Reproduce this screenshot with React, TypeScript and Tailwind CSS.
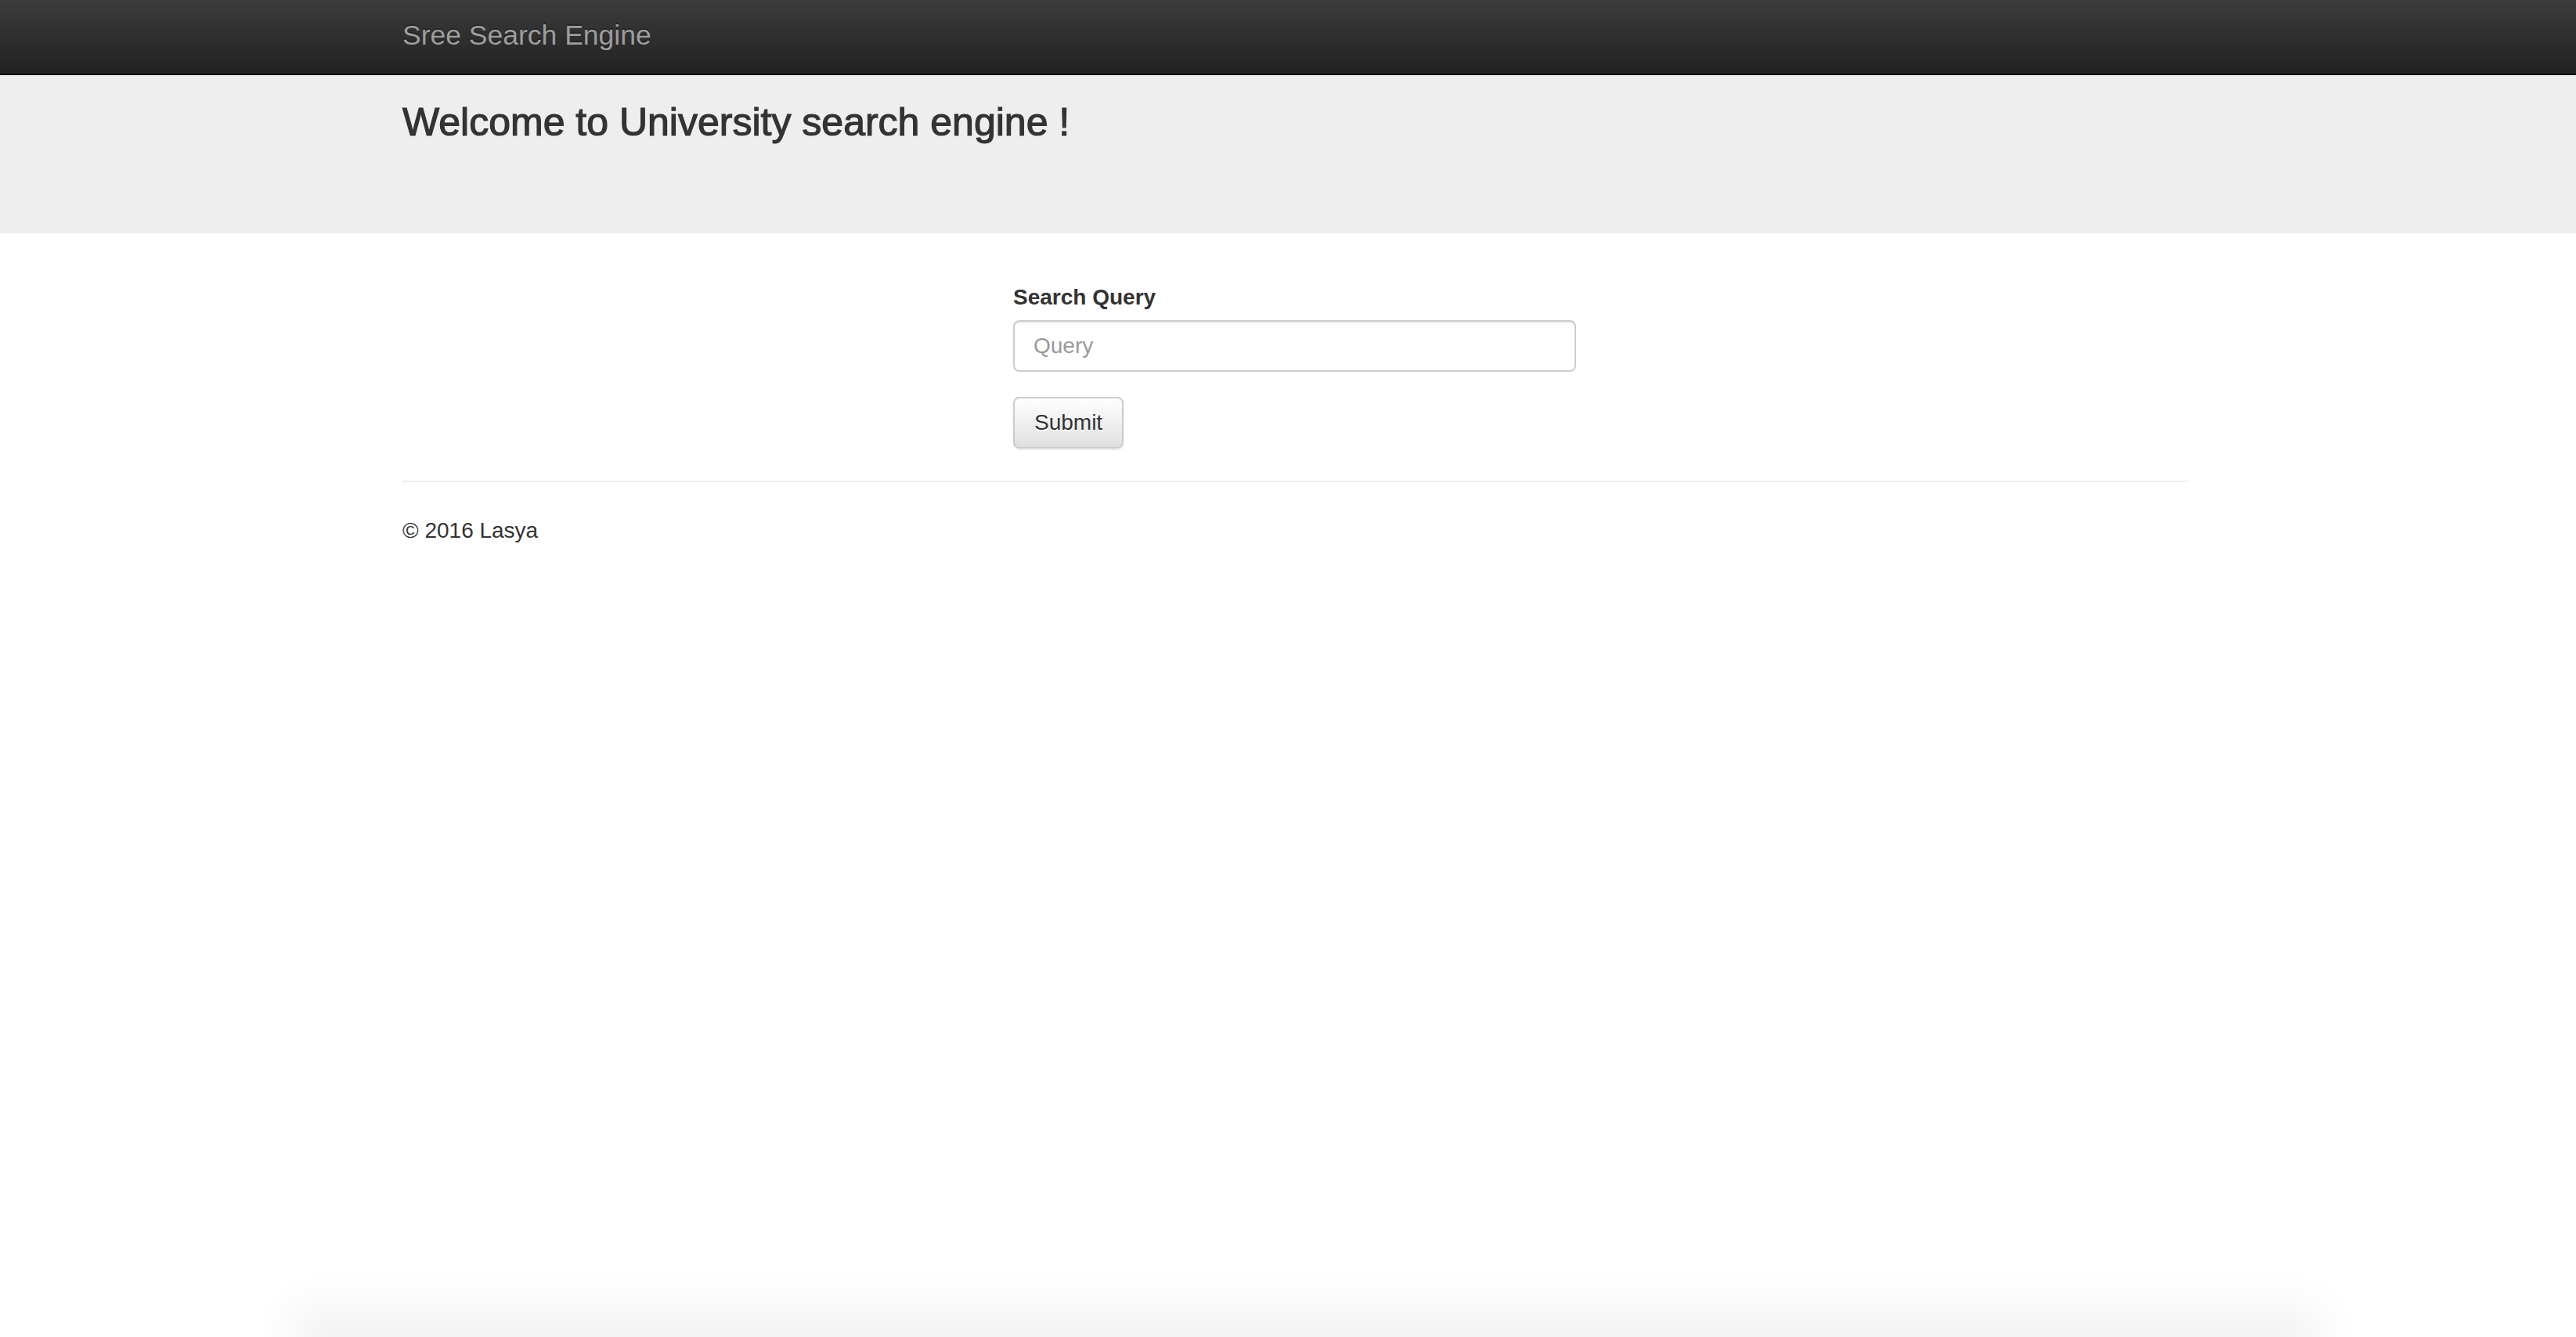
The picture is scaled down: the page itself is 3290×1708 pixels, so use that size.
import React from 'react';

function App() {
  const [query, setQuery] = React.useState('');

  return (
    <div className="h-[1708px] overflow-hidden flex flex-col bg-white font-['Liberation_Sans',Arial,sans-serif] text-[#333]">
      <nav className="h-[96px] shrink-0 border-b-2 border-[#080808] bg-linear-to-b from-[#3c3c3c] to-[#222]">
        <div className="ml-[514px] w-[2280px] pt-[27px]">
          <a href="#" className="text-[35.5px] leading-[36px] text-[#9d9d9d] [text-shadow:0_-2px_0_rgba(0,0,0,0.25)]">
            Sree Search Engine
          </a>
        </div>
      </nav>

      <div className="h-[202px] shrink-0 bg-[#eee] pt-[33px]">
        <div className="ml-[514px] w-[2280px]">
          <h1 className="text-[50px] leading-[55px] [-webkit-text-stroke:1.2px_#333]">
            Welcome to University search engine !
          </h1>
        </div>
      </div>

      <div className="ml-[514px] w-[2280px]">
        <form className="ml-[780px] w-[719px] pt-[62px]" onSubmit={(e) => e.preventDefault()}>
          <label htmlFor="q" className="block mb-[9px] text-[28px] leading-[40px] font-bold">
            Search Query
          </label>
          <input
            id="q"
            value={query}
            onChange={(e) => setQuery(e.target.value)}
            placeholder="Query"
            className="block w-full h-[66px] px-[24px] text-[28px] text-[#555] bg-white border-2 border-[#ccc] rounded-[8px] shadow-[inset_0_2px_2px_rgba(0,0,0,0.075)] placeholder:text-[#999] outline-none"
          />
          <button
            type="submit"
            className="mt-[32px] h-[66px] px-[25px] text-[28px] text-[#333] border-2 border-[#ccc] rounded-[8px] bg-linear-to-b from-white to-[#e0e0e0] [text-shadow:0_2px_0_#fff] shadow-[0_2px_2px_rgba(0,0,0,0.075)]"
          >
            Submit
          </button>
        </form>

        <hr className="mt-[41px] border-0 border-t-2 border-[#eee]" />

        <footer className="mt-[42px]">
          <p className="text-[28px] leading-[40px]">© 2016 Lasya</p>
        </footer>
      </div>

      <div className="mt-auto ml-[410px] w-[2517px] h-0 shadow-[0_0_60px_36px_rgba(0,0,0,0.06)]" />
    </div>
  );
}

export default App;
